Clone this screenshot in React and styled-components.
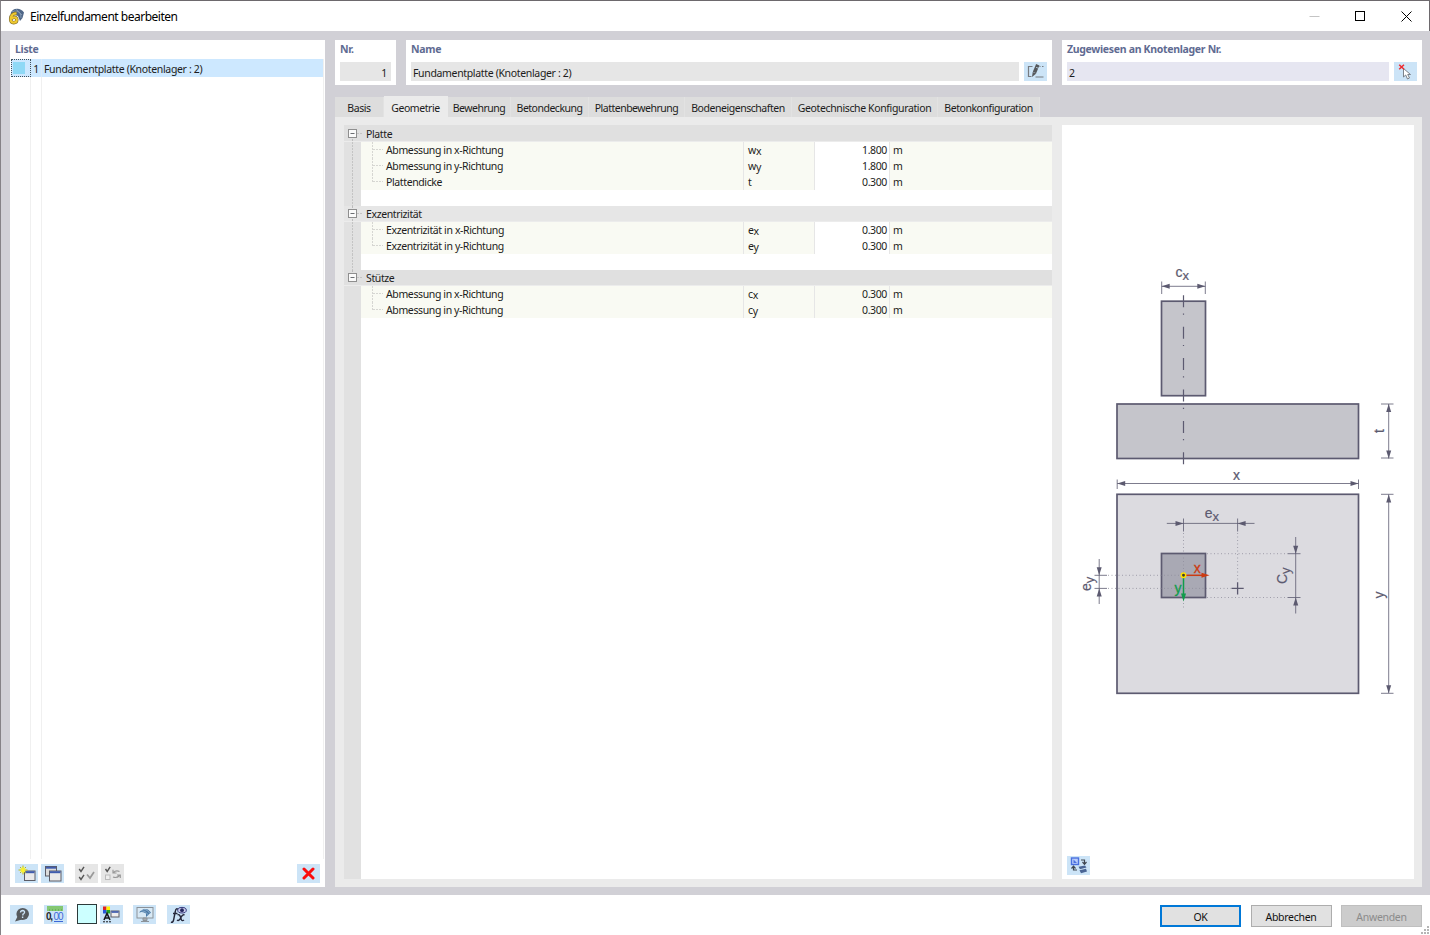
import React from "react";
import styled, { createGlobalStyle, css } from "styled-components";

const Global = createGlobalStyle`
  * { box-sizing: border-box; }
  html, body { margin: 0; padding: 0; }
  body { font-family: "Noto Sans", "Open Sans", sans-serif; font-size: 10.5px; letter-spacing: -0.38px; color: #1c1c20; overflow: hidden; }
  svg { display: block; }
  svg text { letter-spacing: 0; }
`;

const Window = styled.div`
  width: 1430px;
  height: 935px;
  display: flex;
  flex-direction: column;
  background: #fff;
  border-top: 1px solid #6d696d;
  border-left: 1px solid #858286;
`;

const TitleBar = styled.header`
  height: 30px;
  display: flex;
  align-items: center;
  padding-left: 7px;
  border-right: 1px solid #6d696d;
`;

const Title = styled.h1`
  flex: 1;
  margin: 0 0 0 5px;
  font-size: 12px;
  font-weight: 400;
  letter-spacing: -0.49px;
  color: #000;
  white-space: nowrap;
`;

const WindowButton = styled.button`
  width: 46px;
  height: 29px;
  padding: 0;
  border: 0;
  background: none;
  display: flex;
  align-items: center;
  justify-content: center;
`;

const Body = styled.main`
  height: 864px;
  padding: 9px 8px 8px 9px;
  display: flex;
  gap: 10px;
  background: #d1d0d6;
`;

const ListPanel = styled.aside`
  width: 315px;
  display: flex;
  flex-direction: column;
  background: #fff;
`;

const Heading = styled.h2`
  margin: 0;
  height: 19px;
  padding-left: 5px;
  font-size: 10.5px;
  line-height: 18px;
  font-weight: 700;
  letter-spacing: -0.31px;
  color: #5f6b92;
  white-space: nowrap;
`;

const ListBody = styled.div`
  flex: 1;
  margin: 0 1px;
  border-right: 1px solid #f0f0f0;
  display: flex;
  flex-direction: column;
`;

const ListRow = styled.div`
  height: 18px;
  display: flex;
  line-height: 21px;
  background: #cde8ff;
`;

const SwatchCell = styled.div`
  width: 20px;
  padding: 2px 0 0 1px;
  border: 1px dotted #40505c;
`;

const Swatch = styled.div`
  width: 12px;
  height: 12px;
  background: #8fd9f6;
`;

const RowNumber = styled.div`
  width: 11px;
  text-align: right;
  padding-right: 2px;
  border-right: 1px solid #dcebf7;
`;

const RowName = styled.div`
  padding-left: 2px;
  letter-spacing: -0.34px;
  white-space: nowrap;
`;

const ListColumns = styled.div`
  flex: 1;
  width: 31px;
  display: grid;
  grid-template-columns: 20px 11px;
  & > span { border-right: 1px solid #f0f0f0; }
`;

const ListTools = styled.div`
  height: 28px;
  padding: 5px 5px 4px;
  display: flex;
  gap: 3px;
`;

const ToolButton = styled.button`
  width: 23px;
  height: 19px;
  padding: 0;
  border: 0;
  flex: none;
  display: flex;
  align-items: center;
  justify-content: center;
  background: ${(p) => (p.disabled ? "#e6e6e6" : "#cce4f7")};
  margin-left: ${(p) => p.$before || 0}px;
`;

const Content = styled.section`
  flex: 1;
  display: flex;
  flex-direction: column;
`;

const FieldRow = styled.div`
  height: 45px;
  display: grid;
  grid-template-columns: 61px 646px 360px;
  gap: 10px;
`;

const FieldPanel = styled.div`
  background: #fff;
`;

const FieldLine = styled.div`
  margin-top: 3px;
  padding: 0 5px;
  display: flex;
  gap: 5px;
`;

const Field = styled.div`
  flex: 1;
  height: 19px;
  line-height: 23px;
  padding: 0 4px 0 2px;
  background: ${(p) => (p.$tint ? "#e6e6f1" : "#e6e6e6")};
  text-align: ${(p) => (p.$right ? "right" : "left")};
  letter-spacing: -0.34px;
  white-space: nowrap;
`;

const Tabs = styled.nav`
  height: 32px;
  padding-top: 11px;
  display: flex;
  align-items: flex-end;
`;

const Tab = styled.div`
  width: ${(p) => p.$w}px;
  height: 20px;
  display: flex;
  justify-content: center;
  line-height: 23px;
  white-space: nowrap;
  letter-spacing: ${(p) => p.$track}px;
  background: #dddddd;
  border-right: 1px solid #e2e2e2;
  ${(p) => p.$active && css`
    height: 21px;
    line-height: 25px;
    background: #ebebeb;
    border-color: #ebebeb;
  `}
`;

const TabPage = styled.div`
  flex: 1;
  padding: 8px 8px 8px 9px;
  display: flex;
  gap: 10px;
  background: #ebebeb;
`;

const Tree = styled.div`
  width: 708px;
  background: linear-gradient(90deg, #e1e1e1 17px, #fff 17px);
`;

const GroupHead = styled.div`
  height: ${(p) => (p.$first ? 17 : 16)}px;
  padding-top: ${(p) => (p.$first ? 1 : 0)}px;
  display: flex;
  line-height: 17px;
  background: ${(p) => (p.$light ? "#e6e6e6" : "#e0e0e0")};
  border-bottom: 1px solid #ececec;
`;

const PropRow = styled.div`
  height: 16px;
  display: grid;
  grid-template-columns: 17px 383px 71px 75px 162px;
  line-height: 17px;
`;

const Cell = styled.div`
  height: 16px;
  display: flex;
  white-space: nowrap;
  padding: ${(p) => p.$pad || "0"};
  justify-content: ${(p) => (p.$right ? "flex-end" : "flex-start")};
  background: ${(p) => (p.$white ? "#fff" : "#f9faf3")};
  border-right: ${(p) => (p.$line ? "1px solid #e6e6e6" : "0")};
`;

const Sub = styled.span`
  position: relative;
  top: 1px;
`;

const Spacer = styled.div`
  height: 16px;
`;

const Preview = styled.div`
  width: 352px;
  display: flex;
  flex-direction: column;
  padding-bottom: 4px;
  background: #fff;
`;

const Footer = styled.footer`
  height: 40px;
  padding: 10px 8px 0 9px;
  display: flex;
`;

const ColorBox = styled.div`
  width: 20px;
  height: 20px;
  margin: -1px 0 0 10px;
  border: 1px solid #2c3a3a;
  background: #ccffff;
`;

const DialogButtons = styled.div`
  flex: 1;
  display: flex;
  justify-content: flex-end;
  gap: 9.5px;
`;

const DialogButton = styled.button`
  width: 81px;
  height: 22px;
  padding: 1px 0 0;
  font: inherit;
  letter-spacing: -0.3px;
  border: ${(p) => (p.$primary ? "2px solid #0078d7" : "1px solid #adadad")};
  background: ${(p) => (p.disabled ? "#cccccc" : "#e1e1e1")};
  border-color: ${(p) => (p.disabled ? "#bfbfbf" : "")};
  color: ${(p) => (p.disabled ? "#8b8b8b" : "#111")};
`;

const Grip = styled.div`
  align-self: flex-end;
  margin: 0 -8px 0 -1px;
`;

const AppIcon = () => (
  <svg width="17" height="17" viewBox="0 0 17 17">
    <path d="M2.500 5.500Q4 1 9 .8Q13 .6 16 4.500L14.500 10L12 13L10 8Z" fill="#4f6788" />
    <path d="M4 4Q9 1 14 7M8 1.500Q13 4 13 10" stroke="#8ea3bd" strokeWidth=".8" fill="none" />
    <path d="M8.500 5.300Q3 5.500 2.600 11Q2.600 14.700 5.700 14.700Q8.800 14.700 8.800 11.800Q8.800 9.300 6.200 9.300Q4.500 9.300 3.300 10.800" fill="none" stroke="#7d6a2a" strokeWidth="3.400" />
    <path d="M8.500 5.300Q3 5.500 2.600 11Q2.600 14.700 5.700 14.700Q8.800 14.700 8.800 11.800Q8.800 9.300 6.200 9.300Q4.500 9.300 3.300 10.800" fill="none" stroke="#efc92f" strokeWidth="2.200" />
  </svg>
);

const EditIcon = () => (
  <svg width="17" height="15" viewBox="0 0 17 15" fill="none" stroke="#777b80">
    <path d="M5.500 2.500H1.500V12.500H4.500M8.500 13H16.500M12.500 2.500H13.500M15 2.500H16.500" strokeWidth="1.200" />
    <path d="M10.800 .8L7.500 8.500" stroke="#55585c" strokeWidth="3.600" />
    <path d="M5.700 8L5 13L9.300 9.500Z" fill="#55585c" stroke="none" />
    <path d="M9 3.300L12 4.500" stroke="#cce4f7" strokeWidth=".7" />
  </svg>
);

const PickIcon = () => (
  <svg width="15" height="16" viewBox="0 0 15 16">
    <path d="M5.500 4.500V13L7.700 11L9.500 15L11.500 14L9.700 10.500H12.500Z" fill="#fff" stroke="#70757c" strokeWidth=".9" />
    <path d="M1.200 .8L6 5.200M6 .8L1.200 5.200" stroke="#ee2a30" strokeWidth="1.500" />
  </svg>
);

const NewIcon = () => (
  <svg width="18" height="17" viewBox="0 0 18 17">
    <rect x="6.500" y="6" width="10.500" height="9.500" fill="#e9e9ea" stroke="#5c5c66" />
    <path d="M7 7.200H16.500" stroke="#3f5cae" strokeWidth="2" />
    <path d="M5 .5V9.500M.5 5H9.500M2 2L8 8M8 2L2 8" stroke="#a9ad35" />
    <path d="M5 1.500V8.500M1.500 5H8.500M3 3L7 7M7 3L3 7" stroke="#fbf22a" strokeWidth="1.200" />
  </svg>
);

const CopyIcon = () => (
  <svg width="18" height="17" viewBox="0 0 18 17">
    <rect x="1.500" y="1.500" width="11" height="9.500" fill="#dcdcdc" stroke="#5c5c66" />
    <path d="M2 2.700H12" stroke="#3f5cae" strokeWidth="2" />
    <rect x="5.500" y="6" width="11.500" height="10" fill="#e9e9ea" stroke="#5c5c66" />
    <path d="M6 7.200H16.500" stroke="#3f5cae" strokeWidth="2" />
  </svg>
);

const CheckAllIcon = () => (
  <svg width="18" height="16" viewBox="0 0 18 16" fill="none">
    <path d="M1.200 3L3 5.500L6 .8M1.200 11L3 13.500L6 8.800" stroke="#555" strokeWidth="1.400" />
    <path d="M9 8.500L12 12L16 6" stroke="#999" strokeWidth="1.700" />
  </svg>
);

const InvertIcon = () => (
  <svg width="18" height="16" viewBox="0 0 18 16" fill="none">
    <path d="M1.500 3L3.200 5.500L6.200 .8" stroke="#555" strokeWidth="1.400" />
    <rect x="1.500" y="9" width="4.500" height="4.500" fill="#eee" stroke="#bbb" />
    <path d="M9.500 6.500Q12 4 15.500 5.500M9 3.800V7H12.500M15.500 9.500Q13 12.500 9 11M16.300 12V9H13" stroke="#999" strokeWidth="1.200" />
  </svg>
);

const DeleteIcon = () => (
  <svg width="13" height="13" viewBox="0 0 13 13">
    <path d="M2 2L11 11M11 2L2 11" stroke="#fb0d0d" strokeWidth="3" strokeLinecap="round" />
  </svg>
);

const HelpIcon = () => (
  <svg width="16" height="16" viewBox="0 0 16 16">
    <ellipse cx="8.700" cy="7" rx="6.300" ry="5.900" fill="#55595d" />
    <path d="M3.500 9.500L1 14.500L8 12.500Z" fill="#55595d" />
    <path d="M6.500 5.500Q6.700 3.500 8.700 3.500Q10.800 3.700 10.500 5.500Q10.300 6.600 9 7.200L8.800 8.500M8.600 9.500V11" fill="none" stroke="#cce4f7" strokeWidth="1.400" />
  </svg>
);

const DecimalsIcon = () => (
  <svg width="19" height="17" viewBox="0 0 19 17">
    <rect x="1" y="0" width="16" height="5" fill="#84c873" />
    <path d="M3.500 3V5M6.500 3V5M9.500 3V5M12.500 3V5M15.500 3V5" stroke="#6db15d" />
    <text x="0" y="14" fontFamily="Liberation Sans, sans-serif" fontSize="10" fontWeight="700" fill="#26262c" textLength="7">0,</text>
    <text x="7.500" y="14" fontFamily="Liberation Sans, sans-serif" fontSize="10" fill="#3c68d8" textLength="10">00</text>
    <path d="M8 15.500H17" stroke="#3c68d8" />
  </svg>
);

const DisplayColorsIcon = () => (
  <svg width="19" height="17" viewBox="0 0 19 17">
    <rect x="1" y="0.500" width="3.500" height="3.500" fill="#e02222" />
    <rect x="4.500" y="0.500" width="3.500" height="3.500" fill="#fff100" />
    <rect x="1" y="4" width="3.500" height="3.500" fill="#2855d8" />
    <rect x="4.500" y="4" width="3.500" height="3.500" fill="#22a522" />
    <path d="M2 14L5 7.500L8 14M3 12H7" stroke="#17171b" strokeWidth="1.600" fill="none" />
    <path d="M1 15.800H9" stroke="#17171b" strokeDasharray="2 1" />
    <rect x="9" y="5" width="8" height="6" fill="#eee" stroke="#5c5c66" />
    <path d="M9.500 6H16.500" stroke="#3f5cae" strokeWidth="1.700" />
  </svg>
);

const MonitorIcon = () => (
  <svg width="18" height="17" viewBox="0 0 18 17">
    <rect x="1" y="1.500" width="16" height="10.500" fill="#d8e9f5" stroke="#8b9299" />
    <path d="M7 12H11V14.500H7ZM5 15.500H13" fill="#a6acb1" stroke="#8b9299" />
    <path d="M3 6.500Q7 1.500 12 3.500L15 6.500L10 11L10 7.500Q7 5 3 6.500Z" fill="#4978a6" />
    <path d="M5 4.700Q9 4 12.500 9M8 3Q12 4 14 7.500" stroke="#a9c7de" strokeWidth=".7" fill="none" />
  </svg>
);

const FormulaIcon = () => (
  <svg width="18" height="18" viewBox="0 0 18 18" fill="none" stroke="#25273a">
    <path d="M8 3.500Q6 1.500 5.300 5.500L3.700 13.500Q3 17 1 16M3 7.500H7.500" strokeWidth="1.400" />
    <path d="M7.500 9Q9.500 7.800 10.300 10.500L11.300 13.500Q12 15.500 14 14M14.500 9Q12.500 8 10.800 11.800Q9 15.500 7 14" strokeWidth="1.400" />
    <ellipse cx="12" cy="4.200" rx="4.300" ry="2.800" fill="#c9cceb" stroke="#35397d" />
    <circle cx="12" cy="4.200" r="1.900" fill="#22265f" stroke="none" />
  </svg>
);

const SwitchViewIcon = () => (
  <svg width="18" height="17" viewBox="0 0 18 17">
    <rect x="1.500" y="1" width="7" height="6.500" fill="#b9cdfa" stroke="#4a70df" strokeWidth="1.400" />
    <path d="M3.500 2.500V6H7Z" fill="#4a70df" />
    <path d="M11 3H14.500V6.500M12.500 5L14.500 7.300L16.500 5M7 13H3.500V10M1.500 11.500L3.500 9.200L5.500 11.500" fill="none" stroke="#3f4650" strokeWidth="1.200" />
    <path d="M8.500 9.700L15 8.500L16.500 10.500L10 12.300ZM9.500 13.200L16 11.800L17 14.500L11 16.300Z" fill="#4a6595" />
  </svg>
);

const HeadGuide = ({ first, last }) => (
  <svg width="22" height="16" viewBox="0 0 22 16">
    {!first && <path d="M8.500 0V4" stroke="#bdbdbd" strokeDasharray="2 1" />}
    {!last && <path d="M8.500 13V16" stroke="#bdbdbd" strokeDasharray="2 1" />}
    <path d="M13 7.500H19" stroke="#c4c4c4" strokeDasharray="2 1" />
    <rect x="4.500" y="3.500" width="8" height="8" fill="#fafafa" stroke="#8f8f8f" />
    <path d="M6.500 7.500H10.500" stroke="#6b6e72" />
  </svg>
);

const GutterGuide = () => (
  <svg width="17" height="16" viewBox="0 0 17 16">
    <path d="M8.500 0V16" stroke="#c4c4c4" strokeDasharray="2 1" />
  </svg>
);

const RowGuide = ({ last }) => (
  <svg width="25" height="16" viewBox="0 0 25 16">
    <path d={`M11.500 0V${last ? 8 : 16}M12 7.500H22`} stroke="#d6d6d2" strokeDasharray="2 1" fill="none" />
  </svg>
);

const ink = "#5c5a70";

const Arrow = ({ x, y, dir = 0, color = ink, len = 8, half = 2.5 }) => (
  <path d={`M0 0L${-len} ${-half}V${half}Z`} fill={color} transform={`translate(${x} ${y}) rotate(${dir})`} />
);

const FoundationDrawing = () => (
  <svg width="352" height="731" viewBox="1062 125 352 731" fill="none" fontFamily="'Liberation Sans', Arial, sans-serif" fontSize="14">
    <g stroke={ink} strokeWidth="1.700">
      <rect x="1161.500" y="301.200" width="44" height="94.500" fill="#c5c5cb" />
      <rect x="1117" y="404" width="241.500" height="54.500" fill="#c5c5cb" />
      <rect x="1117" y="494.300" width="241.500" height="199" fill="#dcdbe0" />
      <rect x="1161.500" y="553.500" width="44" height="44" fill="#a9a9b4" />
    </g>
    <path d="M1183.500 295.300V464.500" stroke={ink} strokeWidth="1.200" strokeDasharray="12 6.200 1.200 12" />
    <g stroke={ink} strokeWidth=".8">
      <path d="M1161.700 286.300H1205.300M1161.700 281.500V294M1205.300 281.500V294" />
      <path d="M1117.200 483.500H1358.500M1117.200 479.500V489M1358.500 479.500V489" />
      <path d="M1388.700 404V458.500M1381 404H1393.500M1381 458H1393.500" />
      <path d="M1388.700 494.500V693M1381 494.300H1393.500M1381 693.300H1393.500" />
      <path d="M1166.800 523.400H1254.500M1183.500 518.500V531.500M1237.600 518.500V531.500" />
      <path d="M1099.200 559V604M1094.500 575.300H1107M1094.500 588.400H1107" />
      <path d="M1295.700 537V613.500M1287.500 553.700H1300.500M1287.500 597.500H1300.500" />
    </g>
    <path d="M1231.500 588.400H1243.700M1237.600 582.300V594.500" stroke={ink} strokeWidth="1.300" />
    <g stroke="#8f8e9c" strokeWidth=".8" strokeDasharray="1 2.500">
      <path d="M1183.500 533V608M1237.600 533V581" />
      <path d="M1108 575.300H1183M1108 588.400H1231" />
      <path d="M1207 553.700H1287M1207 597.500H1287" />
    </g>
    <Arrow x={1161.700} y={286.300} dir={180} />
    <Arrow x={1205.300} y={286.300} />
    <Arrow x={1117.200} y={483.500} dir={180} />
    <Arrow x={1358.500} y={483.500} />
    <Arrow x={1388.700} y={404} dir={-90} />
    <Arrow x={1388.700} y={458.500} dir={90} />
    <Arrow x={1388.700} y={494.500} dir={-90} />
    <Arrow x={1388.700} y={693.300} dir={90} />
    <Arrow x={1183.500} y={523.400} />
    <Arrow x={1237.600} y={523.400} dir={180} />
    <Arrow x={1099.200} y={575.300} dir={90} />
    <Arrow x={1099.200} y={588.400} dir={-90} />
    <Arrow x={1295.700} y={553.700} dir={90} />
    <Arrow x={1295.700} y={597.500} dir={-90} />
    <path d="M1183.500 575.300H1203" stroke="#cc3b12" strokeWidth="1.500" />
    <Arrow x={1209.500} y={575.300} color="#cc3b12" />
    <path d="M1183.500 575.300V595" stroke="#119c4b" strokeWidth="1.500" />
    <Arrow x={1183.500} y={601.500} dir={90} color="#119c4b" />
    <circle cx="1183.500" cy="575.300" r="2.200" fill="#3b3b30" stroke="#ffe100" strokeWidth="1.500" />
    <g fill={ink} stroke={ink} strokeWidth=".2">
      <text x="1175.500" y="277">c<tspan dy="3" fontSize="13">x</tspan></text>
      <text x="1233" y="480">x</text>
      <text x="1204.700" y="518">e<tspan dy="3" fontSize="13">x</tspan></text>
      <text transform="translate(1383.500 433) rotate(-90)">t</text>
      <text transform="translate(1383.500 598.500) rotate(-90)">y</text>
      <text transform="translate(1090.500 591) rotate(-90)">e<tspan dy="3" fontSize="13">y</tspan></text>
      <text transform="translate(1286.500 584) rotate(-90)">C<tspan dy="3" fontSize="13">y</tspan></text>
    </g>
    <text x="1193.700" y="573" fill="#cc3b12" stroke="#cc3b12" strokeWidth=".3">x</text>
    <text x="1174.500" y="592.500" fill="#119c4b" stroke="#119c4b" strokeWidth=".3">y</text>
  </svg>
);

const groups = [
  { name: "Platte", rows: [["Abmessung in x-Richtung", "w", "x", "1.800"], ["Abmessung in y-Richtung", "w", "y", "1.800"], ["Plattendicke", "t", "", "0.300"]], editable: true },
  { name: "Exzentrizität", rows: [["Exzentrizität in x-Richtung", "e", "x", "0.300"], ["Exzentrizität in y-Richtung", "e", "y", "0.300"]], editable: true, light: true },
  { name: "Stütze", rows: [["Abmessung in x-Richtung", "c", "x", "0.300"], ["Abmessung in y-Richtung", "c", "y", "0.300"]] },
];

const tabs = [
  ["Basis", 49, -0.4],
  ["Geometrie", 64, -0.43],
  ["Bewehrung", 63, -0.5],
  ["Betondeckung", 78, -0.5],
  ["Plattenbewehrung", 96, -0.5],
  ["Bodeneigenschaften", 107, -0.46],
  ["Geotechnische Konfiguration", 146, -0.37],
  ["Betonkonfiguration", 102, -0.45],
];

export default function App() {
  return (
    <>
      <Global />
      <Window>
        <TitleBar>
          <AppIcon />
          <Title>Einzelfundament bearbeiten</Title>
          <WindowButton>
            <svg width="11" height="11"><path d="M.5 5.500H10.500" stroke="#c4c4c4" /></svg>
          </WindowButton>
          <WindowButton>
            <svg width="11" height="11"><rect x=".5" y=".5" width="9" height="9" fill="none" stroke="#000" /></svg>
          </WindowButton>
          <WindowButton>
            <svg width="11" height="11"><path d="M.5 .5L10.500 10.500M10.500 .5L.5 10.500" stroke="#000" /></svg>
          </WindowButton>
        </TitleBar>
        <Body>
          <ListPanel>
            <Heading>Liste</Heading>
            <ListBody>
              <ListRow>
                <SwatchCell><Swatch /></SwatchCell>
                <RowNumber>1</RowNumber>
                <RowName>Fundamentplatte (Knotenlager : 2)</RowName>
              </ListRow>
              <ListColumns><span /><span /></ListColumns>
            </ListBody>
            <ListTools>
              <ToolButton><NewIcon /></ToolButton>
              <ToolButton><CopyIcon /></ToolButton>
              <ToolButton disabled $before={8}><CheckAllIcon /></ToolButton>
              <ToolButton disabled><InvertIcon /></ToolButton>
              <ToolButton $before={170}><DeleteIcon /></ToolButton>
            </ListTools>
          </ListPanel>
          <Content>
            <FieldRow>
              <FieldPanel>
                <Heading>Nr.</Heading>
                <FieldLine><Field $right>1</Field></FieldLine>
              </FieldPanel>
              <FieldPanel>
                <Heading>Name</Heading>
                <FieldLine>
                  <Field>Fundamentplatte (Knotenlager : 2)</Field>
                  <ToolButton><EditIcon /></ToolButton>
                </FieldLine>
              </FieldPanel>
              <FieldPanel>
                <Heading>Zugewiesen an Knotenlager Nr.</Heading>
                <FieldLine>
                  <Field $tint>2</Field>
                  <ToolButton><PickIcon /></ToolButton>
                </FieldLine>
              </FieldPanel>
            </FieldRow>
            <Tabs>
              {tabs.map(([name, w, track], i) => (
                <Tab key={name} $w={w} $track={track} $active={i === 1}>{name}</Tab>
              ))}
            </Tabs>
            <TabPage>
              <Tree>
                {groups.map((g, gi) => (
                  <React.Fragment key={g.name}>
                    <GroupHead $first={gi === 0} $light={g.light}>
                      <HeadGuide first={gi === 0} last={gi === 2} />
                      {g.name}
                    </GroupHead>
                    {g.rows.map(([label, sym, sub, value], ri) => (
                      <PropRow key={label}>
                        {gi < 2 ? <GutterGuide /> : <span />}
                        <Cell $line><RowGuide last={ri === g.rows.length - 1} />{label}</Cell>
                        <Cell $line $pad="0 0 0 4px">{sym}<Sub>{sub}</Sub></Cell>
                        <Cell $line $right $white={g.editable} $pad="0 2px 0 0">{value}</Cell>
                        <Cell $pad="0 0 0 3px">m</Cell>
                      </PropRow>
                    ))}
                    {gi < 2 && <Spacer><GutterGuide /></Spacer>}
                  </React.Fragment>
                ))}
              </Tree>
              <Preview>
                <FoundationDrawing />
                <ToolButton $before={5}><SwitchViewIcon /></ToolButton>
              </Preview>
            </TabPage>
          </Content>
        </Body>
        <Footer>
          <ToolButton><HelpIcon /></ToolButton>
          <ToolButton $before={11}><DecimalsIcon /></ToolButton>
          <ColorBox />
          <ToolButton $before={3}><DisplayColorsIcon /></ToolButton>
          <ToolButton $before={10}><MonitorIcon /></ToolButton>
          <ToolButton $before={11}><FormulaIcon /></ToolButton>
          <DialogButtons>
            <DialogButton $primary>OK</DialogButton>
            <DialogButton>Abbrechen</DialogButton>
            <DialogButton disabled>Anwenden</DialogButton>
          </DialogButtons>
          <Grip>
            <svg width="9" height="9" viewBox="0 0 9 9" fill="#b5b5b5">
              <path d="M6 0h2v2h-2zM3 3h2v2h-2zM6 3h2v2h-2zM0 6h2v2h-2zM3 6h2v2h-2zM6 6h2v2h-2z" />
            </svg>
          </Grip>
        </Footer>
      </Window>
    </>
  );
}
